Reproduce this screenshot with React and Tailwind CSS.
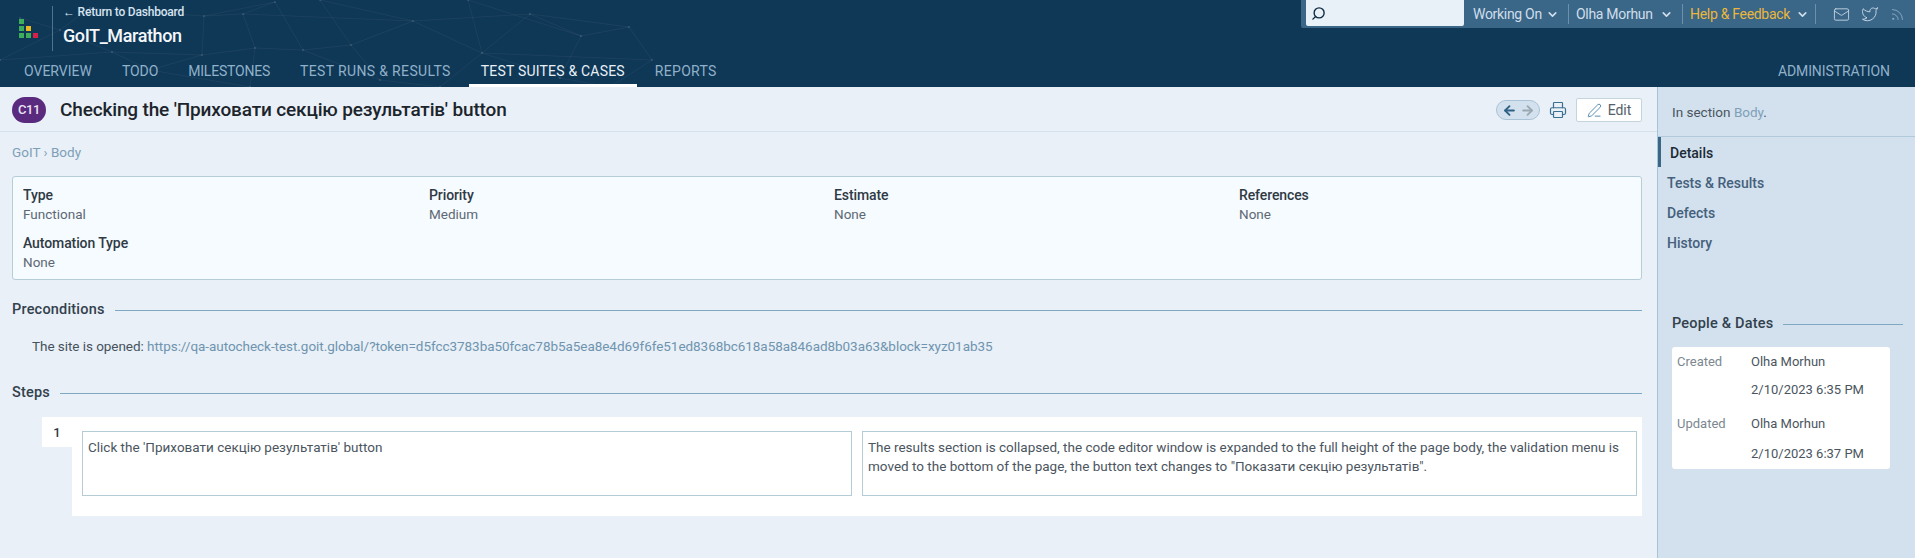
import { ChevronDown, Mail, Twitter, Rss, Search, ArrowLeft, ArrowRight, Printer, PenLine } from 'lucide-react'

const NAV = [
  { label: 'OVERVIEW', cls: 'tracking-[0px]' },
  { label: 'TODO', cls: 'tracking-[-0.1px]' },
  { label: 'MILESTONES', cls: 'tracking-[-0.2px]' },
  { label: 'TEST RUNS & RESULTS', cls: 'tracking-[0.35px]' },
  { label: 'TEST SUITES & CASES', cls: 'tracking-[0.2px]', active: true },
  { label: 'REPORTS', cls: 'tracking-[0.3px]' },
]

const FIELDS = [
  ['Type', 'Functional'],
  ['Priority', 'Medium'],
  ['Estimate', 'None'],
  ['References', 'None'],
  ['Automation Type', 'None'],
]

const NODES = [
  [275, 2], [204, 16], [243, 14], [413, 21], [530, 14], [581, 36], [629, 27], [351, 45],
  [303, 50], [255, 48], [202, 55], [112, 52], [482, 53], [652, 60], [468, 0], [60, 30],
  [150, 70], [380, 80], [560, 78], [20, 18], [90, 8], [320, 0], [440, 87], [610, 87], [0, 60], [250, 87],
]
const LINKS = [
  [0, 1], [0, 2], [1, 2], [2, 3], [3, 4], [4, 5], [5, 6], [3, 7], [7, 8], [8, 9], [9, 10], [10, 11],
  [4, 12], [12, 13], [6, 13], [14, 12], [14, 5], [15, 11], [11, 16], [10, 16], [8, 17], [7, 17], [12, 18],
  [5, 18], [0, 8], [3, 12], [1, 10], [19, 15], [20, 15], [20, 1], [21, 7], [21, 3], [12, 22], [18, 23],
  [13, 23], [24, 15], [24, 11], [16, 25], [9, 25], [17, 22], [2, 9], [4, 6],
]

function HeaderBackground() {
  return (
    <svg className="absolute inset-0 w-full h-full" viewBox="0 0 1915 87" preserveAspectRatio="none">
      {LINKS.map(([a, b], i) => (
        <line key={i} x1={NODES[a][0]} y1={NODES[a][1]} x2={NODES[b][0]} y2={NODES[b][1]} stroke="#ffffff" strokeOpacity="0.05" />
      ))}
      {NODES.map(([x, y], i) => <circle key={i} cx={x} cy={y} r="1.2" fill="#ffffff" fillOpacity="0.1" />)}
    </svg>
  )
}

function Logo() {
  const g = 'w-[5px] h-[5px] bg-[#3fae5a]'
  return (
    <div className="grid grid-cols-[5px_5px_5px] grid-rows-[5px_5px_5px] gap-[2px] w-[19px]">
      <div className={g} /><div /><div />
      <div className={g} /><div className="w-[5px] h-[5px] bg-[#e8b923]" /><div />
      <div className={g} /><div className={g} /><div className="w-[5px] h-[5px] bg-[#d81e4a]" />
    </div>
  )
}

function SectionTitle({ children, className = '' }) {
  return (
    <div className={`flex items-center gap-[10px] ${className}`}>
      <span className="text-[14.5px] font-medium text-[#33414e] leading-[18px] tracking-[0.2px] whitespace-nowrap">{children}</span>
      <div className="flex-1 h-px bg-[#7fa8c3]" />
    </div>
  )
}

function StepCell({ children, className = '' }) {
  return <div className={`h-[65px] border border-[#b5ccd6] bg-white px-[5px] py-[6px] text-[13.5px] leading-[19px] text-[#4b5560] ${className}`}>{children}</div>
}

export default function App() {
  return (
    <div className="w-[1915px] h-[558px] overflow-hidden flex flex-col bg-[#e9f0f7] font-['Roboto',sans-serif]">
      <header className="relative h-[87px] shrink-0 bg-[#0f3756]">
        <HeaderBackground />
        <div className="relative flex h-[58px]">
          <div className="w-[52px] pl-[19px] pt-[19px]"><Logo /></div>
          <div className="mt-[6px] h-[45px] border-l border-[#4d7391] pl-[10px]">
            <div className="text-[12px] font-medium text-[#d6e4f0] leading-[12px] tracking-[-0.2px] whitespace-nowrap">← Return to Dashboard</div>
            <div className="mt-[7px] text-[18px] font-medium text-[#f4f8fb] leading-[22px] tracking-[-0.4px]">GoIT_Marathon</div>
          </div>
          <div className="ml-auto h-[28px] w-[614px] flex items-center bg-[#3a6688] rounded-bl-[2px] pl-[5px] text-[14px] text-[#cfdeea] self-start">
            <div className="w-[158px] h-[26px] self-start bg-[#e9f1f8] rounded-b-[2px] flex items-center pl-[5px]">
              <Search className="w-[15px] h-[15px] text-[#0f2a40] -scale-x-100" strokeWidth={2.2} />
            </div>
            <span className="ml-[9px] w-[67px] whitespace-nowrap tracking-[-0.3px]">Working On</span>
            <ChevronDown className="ml-[6px] w-[13px] h-[13px]" strokeWidth={3} />
            <div className="ml-[9px] h-[20px] border-l border-[#6c90ab]" />
            <span className="ml-[7px] w-[75px] whitespace-nowrap tracking-[-0.3px]">Olha Morhun</span>
            <ChevronDown className="ml-[9px] w-[13px] h-[13px]" strokeWidth={3} />
            <div className="ml-[9px] h-[20px] border-l border-[#6c90ab]" />
            <span className="ml-[7px] w-[101px] whitespace-nowrap text-[#eab73d] tracking-[-0.3px]">Help & Feedback</span>
            <ChevronDown className="ml-[5px] w-[13px] h-[13px]" strokeWidth={3} />
            <div className="ml-[6px] h-[20px] border-l border-[#6c90ab]" />
            <Mail className="ml-[17px] w-[17px] h-[17px]" strokeWidth={1.2} />
            <Twitter className="ml-[11px] w-[18px] h-[18px]" strokeWidth={1.2} />
            <Rss className="ml-[11px] w-[15px] h-[15px] text-[#9fbad0]" strokeWidth={1.2} />
          </div>
        </div>
        <nav className="relative flex h-[29px] pl-[12px] pr-[25px] gap-[6px] text-[14px]">
          {NAV.map(item => (
            <a key={item.label} className={`px-[12px] pt-[3px] whitespace-nowrap ${item.cls} ${item.active ? 'text-[#e8f0f6] border-b-[3px] border-white' : 'text-[#8fb1ca]'}`}>{item.label}</a>
          ))}
          <a className="ml-auto pt-[3px] text-[#8fb1ca] tracking-[-0.1px]">ADMINISTRATION</a>
        </nav>
      </header>

      <div className="flex flex-1 min-h-0">
        <main className="w-[1657px] shrink-0 pl-[12px] pr-[15px]">
          <div className="-ml-[12px] -mr-[15px] h-[45px] pl-[12px] pr-[15px] pt-[2px] flex items-center border-b border-[#d5e1ea]">
            <div className="w-[34px] h-[26px] rounded-[13px] bg-[#5a2a7f] text-[#ece4f3] text-[13px] font-medium flex items-center justify-center tracking-[-0.4px]">C11</div>
            <h1 className="ml-[14px] text-[19px] font-medium text-[#1c242c] tracking-[-0.15px] whitespace-nowrap">Checking the 'Приховати секцію результатів' button</h1>
            <div className="ml-auto w-[44px] h-[20px] rounded-[10px] border border-[#a9c3d6] bg-[#d2e1ed] flex items-center justify-center gap-[3px]">
              <ArrowLeft className="w-[15px] h-[15px] text-[#2f6186]" strokeWidth={3} />
              <ArrowRight className="w-[15px] h-[15px] text-[#9aa8b2]" strokeWidth={3} />
            </div>
            <Printer className="ml-[9px] w-[18px] h-[18px] text-[#3b6f91]" strokeWidth={1.6} />
            <button className="ml-[9px] w-[66px] h-[24px] bg-white border border-[#c5d5e0] rounded-[2px] flex items-center justify-center gap-[6px] text-[14px] text-[#55606a]">
              <PenLine className="w-[15px] h-[15px] text-[#4f87ac]" strokeWidth={1.5} />
              Edit
            </button>
          </div>

          <div className="mt-[11px] text-[13.5px] leading-[18px] text-[#7f9fb8]">GoIT › Body</div>

          <div className="mt-[15px] h-[104px] w-[1630px] rounded-[3px] border border-[#b5ccd9] bg-[#f6fbff] pl-[10px] pt-[9px] grid grid-cols-[406px_405px_405px_1fr] auto-rows-[48px] leading-[19px]">
            {FIELDS.map(([label, value]) => (
              <div key={label}>
                <div className="text-[14px] font-medium text-[#2f3a44] tracking-[-0.1px]">{label}</div>
                <div className="text-[13.5px] text-[#5d6873]">{value}</div>
              </div>
            ))}
          </div>

          <SectionTitle className="mt-[21px]">Preconditions</SectionTitle>
          <p className="mt-[18px] pl-[20px] text-[13.5px] leading-[19px] text-[#46525d] whitespace-nowrap tracking-[-0.05px]">
            The site is opened: <a className="text-[#6f94b0]">https://qa-autocheck-test.goit.global/?token=d5fcc3783ba50fcac78b5a5ea8e4d69f6fe51ed8368bc618a58a846ad8b03a63&block=xyz01ab35</a>
          </p>

          <SectionTitle className="mt-[28px]">Steps</SectionTitle>

          <div className="mt-[15px] ml-[30px] w-[1600px] flex">
            <div className="w-[30px] h-[30px] shrink-0 bg-white text-[13px] font-medium text-[#2f3a44] text-center leading-[32px]">1</div>
            <div className="flex-1 h-[99px] bg-white pl-[10px] pr-[5px] pt-[14px] flex gap-[10px]">
              <StepCell className="w-[770px]">Click the 'Приховати секцію результатів' button</StepCell>
              <StepCell className="flex-1">The results section is collapsed, the code editor window is expanded to the full height of the page body, the validation menu is moved to the bottom of the page, the button text changes to "Показати секцію результатів".</StepCell>
            </div>
          </div>
        </main>

        <aside className="flex-1 bg-[#d2e1ed] border-l border-[#a9c3d6]">
          <div className="h-[50px] pl-[14px] pt-[16px] border-b border-[#b1c9da] text-[13.5px] leading-[18px] text-[#4b5560]">
            In section <a className="text-[#7f9fb8]">Body</a>.
          </div>
          <div className="text-[14px] font-medium text-[#45607c]">
            <div className="h-[30px] pl-[9px] border-l-[3px] border-[#3a6688] leading-[33px] text-[#1c2a36]">Details</div>
            <div className="h-[30px] pl-[9px] leading-[33px]">Tests & Results</div>
            <div className="h-[30px] pl-[9px] leading-[33px]">Defects</div>
            <div className="h-[30px] pl-[9px] leading-[33px]">History</div>
          </div>
          <div className="mt-[58px] pl-[14px] pr-[12px]">
            <SectionTitle>People & Dates</SectionTitle>
            <div className="mt-[14px] w-[218px] h-[122px] bg-white rounded-[3px] pl-[5px] pt-[4px] grid grid-cols-[74px_1fr] grid-rows-[28px_34px_30px_30px] text-[13px] leading-[22px]">
              <span className="text-[#7c8790]">Created</span><span className="text-[#4b5560]">Olha Morhun</span>
              <span /><span className="text-[#4b5560]">2/10/2023 6:35 PM</span>
              <span className="text-[#7c8790]">Updated</span><span className="text-[#4b5560]">Olha Morhun</span>
              <span /><span className="text-[#4b5560]">2/10/2023 6:37 PM</span>
            </div>
          </div>
        </aside>
      </div>
    </div>
  )
}
